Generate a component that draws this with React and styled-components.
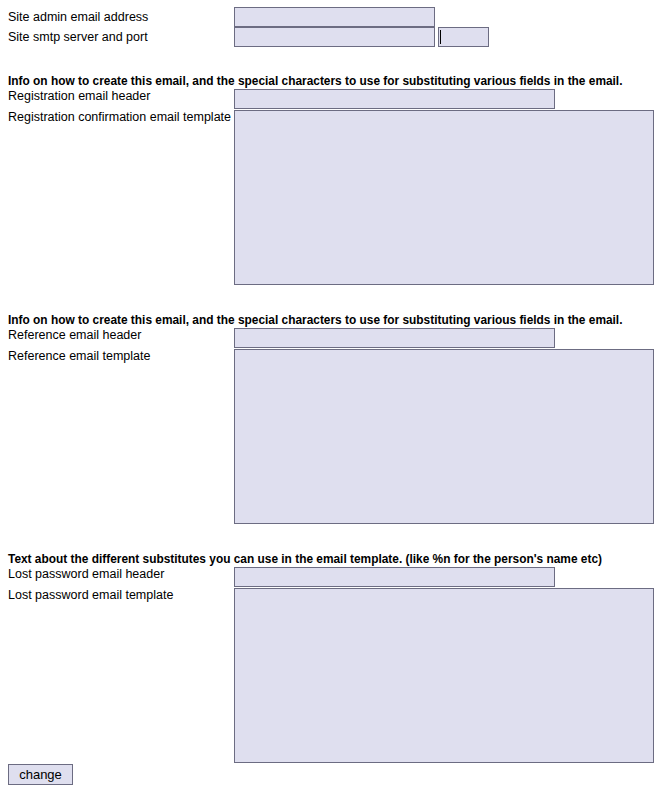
import React from "react";
import styled, { createGlobalStyle } from "styled-components";

const GlobalStyle = createGlobalStyle`
  body {
    margin: 0;
    background: #ffffff;
    font-family: "Liberation Sans", Arial, sans-serif;
    font-size: 12.5px;
    color: #000000;
  }
`;

const Form = styled.form`
  padding: 7px 8px 4px 8px;
  display: flex;
  flex-direction: column;
`;

const Block = styled.div`
  display: flex;
  flex-direction: column;
  margin-bottom: ${(p) => p.gap ?? 27}px;
`;

const Heading = styled.div`
  font-weight: bold;
  font-size: ${(p) => p.size || 11.9}px;
  height: 16px;
  line-height: 17px;
  white-space: nowrap;
`;

const Row = styled.div`
  display: grid;
  grid-template-columns: 226px 1fr;
  align-items: ${(p) => (p.top ? "start" : "center")};
  margin-bottom: ${(p) => p.space || 0}px;
`;

const Label = styled.label`
  line-height: ${(p) => p.lh || 20}px;
  white-space: nowrap;
`;

const Fields = styled.div`
  display: flex;
  align-items: center;
  gap: 3px;
`;

const TextInput = styled.input`
  box-sizing: border-box;
  width: ${(p) => p.w}px;
  height: 20px;
  margin: 0;
  padding: 1px 3px;
  border: 1px solid #6c6c82;
  background: #dfdfef;
  font-family: inherit;
  font-size: 13px;
  outline: none;
`;

const PortWrap = styled.span`
  position: relative;
  display: inline-block;
`;

const Caret = styled.span`
  position: absolute;
  left: 2px;
  top: 3px;
  width: 1px;
  height: 14px;
  background: #000000;
`;

const TextArea = styled.textarea`
  box-sizing: border-box;
  display: block;
  width: 420px;
  height: 175px;
  margin: 0;
  padding: 2px;
  border: 1px solid #6c6c82;
  background: #dfdfef;
  font-family: inherit;
  font-size: 13px;
  resize: none;
  outline: none;
`;

const Button = styled.button`
  box-sizing: border-box;
  align-self: flex-start;
  width: 65px;
  height: 21px;
  margin-top: 1px;
  padding: 0;
  border: 1px solid #6c6c82;
  background: #dfdfef;
  font-family: inherit;
  font-size: 13px;
  color: #000000;
  cursor: pointer;
`;

const sections = [
  {
    info:
      "Info on how to create this email, and the special characters to use for substituting various fields in the email.",
    size: 11.9,
    header: "Registration email header",
    template: "Registration confirmation email template",
  },
  {
    info:
      "Info on how to create this email, and the special characters to use for substituting various fields in the email.",
    size: 11.9,
    header: "Reference email header",
    template: "Reference email template",
  },
  {
    info:
      "Text about the different substitutes you can use in the email template. (like %n for the person's name etc)",
    size: 11.9,
    header: "Lost password email header",
    template: "Lost password email template",
  },
];

const App = () => {
  return (
    <>
      <GlobalStyle />
      <Form onSubmit={(e) => e.preventDefault()}>
        <Block gap={26}>
          <Row>
            <Label>Site admin email address</Label>
            <Fields>
              <TextInput type="text" w={201} />
            </Fields>
          </Row>
          <Row>
            <Label>Site smtp server and port</Label>
            <Fields>
              <TextInput type="text" w={201} />
              <PortWrap>
                <TextInput type="text" w={51} />
                <Caret />
              </PortWrap>
            </Fields>
          </Row>
        </Block>

        {sections.map((s, i) => (
          <Block key={i} gap={i === sections.length - 1 ? 0 : 27}>
            <Heading size={s.size}>{s.info}</Heading>
            <Row top space={1}>
              <Label lh={15}>{s.header}</Label>
              <Fields>
                <TextInput type="text" w={321} />
              </Fields>
            </Row>
            <Row top>
              <Label lh={14}>{s.template}</Label>
              <TextArea />
            </Row>
          </Block>
        ))}

        <Button type="submit">change</Button>
      </Form>
    </>
  );
};

export default App;
